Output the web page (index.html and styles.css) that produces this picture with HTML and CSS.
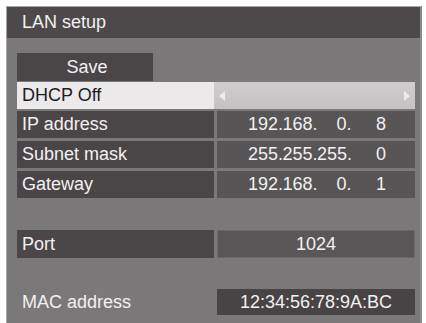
FILE: index.html
```html
<!DOCTYPE html>
<html>
<head>
<meta charset="utf-8">
<link rel="stylesheet" href="styles.css">
</head>
<body>
<div class="panel">
  <div class="title">LAN setup</div>
  <div class="content">
    <div class="save">Save</div>
    <div class="row dhcp">
      <div class="label">DHCP Off</div>
      <div class="value">
        <span class="arrow left"></span>
        <span class="arrow right"></span>
      </div>
    </div>
    <div class="group">
      <div class="row">
        <div class="label">IP address</div>
        <div class="value ip"><span>192.</span><span>168.</span><span>0.</span><span>8</span></div>
      </div>
      <div class="row">
        <div class="label">Subnet mask</div>
        <div class="value ip"><span>255.</span><span>255.</span><span>255.</span><span>0</span></div>
      </div>
      <div class="row">
        <div class="label">Gateway</div>
        <div class="value ip"><span>192.</span><span>168.</span><span>0.</span><span>1</span></div>
      </div>
    </div>
    <div class="row port">
      <div class="label">Port</div>
      <div class="value center">1024</div>
    </div>
    <div class="row mac">
      <div class="label">MAC address</div>
      <div class="value center">12:34:56:78:9A:BC</div>
    </div>
  </div>
</div>
</body>
</html>
```
FILE: styles.css
```css
html, body {
  margin: 0;
  padding: 0;
  background: #ffffff;
  overflow: hidden;
}
body {
  font-family: "Liberation Sans", Arial, sans-serif;
  color: #f2f0f1;
}
.panel {
  margin: 6px 0 0 6px;
  width: 413px;
  height: 330px;
  background: #7b7879;
  border: 1px solid #a8a6a7;
  border-right: 2px solid #8e8b8c;
  box-sizing: content-box;
}
.title {
  height: 31px;
  line-height: 31px;
  background: #4d494a;
  font-size: 18px;
  padding-left: 15px;
}
.content {
  padding: 15px 5px 0 10px;
  display: flex;
  flex-direction: column;
}
.save {
  width: 136px;
  height: 28px;
  line-height: 28px;
  background: #4a4647;
  text-align: center;
  font-size: 18px;
  padding-left: 4px;
  box-sizing: border-box;
}
.row {
  display: flex;
  gap: 3px;
  height: 27px;
}
.label {
  width: 197px;
  background: #4a4647;
  font-size: 18px;
  line-height: 27px;
  padding-left: 5px;
  box-sizing: border-box;
}
.value {
  width: 198px;
  background: #585556;
  font-size: 18px;
  line-height: 27px;
  box-sizing: border-box;
}
.dhcp {
  margin-top: 1px;
  gap: 0;
}
.dhcp .label {
  background: #ebe9ea;
  color: #1e1c1d;
  width: 197px;
}
.dhcp .value {
  width: 201px;
  background: linear-gradient(#cfcdce, #c3c1c2);
  position: relative;
}
.arrow {
  position: absolute;
  top: 9px;
  width: 0;
  height: 0;
  border-top: 5px solid transparent;
  border-bottom: 5px solid transparent;
}
.arrow.left {
  left: 5px;
  border-right: 6px solid #ececec;
}
.arrow.right {
  right: 5px;
  border-left: 6px solid #ececec;
}
.group {
  margin-top: 2px;
  display: flex;
  flex-direction: column;
  gap: 3px;
}
.ip {
  display: flex;
  padding-left: 31px;
}
.ip span {
  width: 34.5px;
  text-align: right;
}
.center {
  text-align: center;
}
.port {
  margin-top: 32px;
  height: 28px;
}
.port .label {
  line-height: 28px;
  background: #4b4748;
}
.port .value {
  line-height: 26px;
  background: #5a5758;
  border: 1px solid #6c696a;
}
.mac {
  margin-top: 31px;
  height: 26px;
}
.mac .label {
  background: transparent;
  line-height: 26px;
}
.mac .value {
  background: #484445;
  line-height: 27px;
  font-size: 18px;
}
```
